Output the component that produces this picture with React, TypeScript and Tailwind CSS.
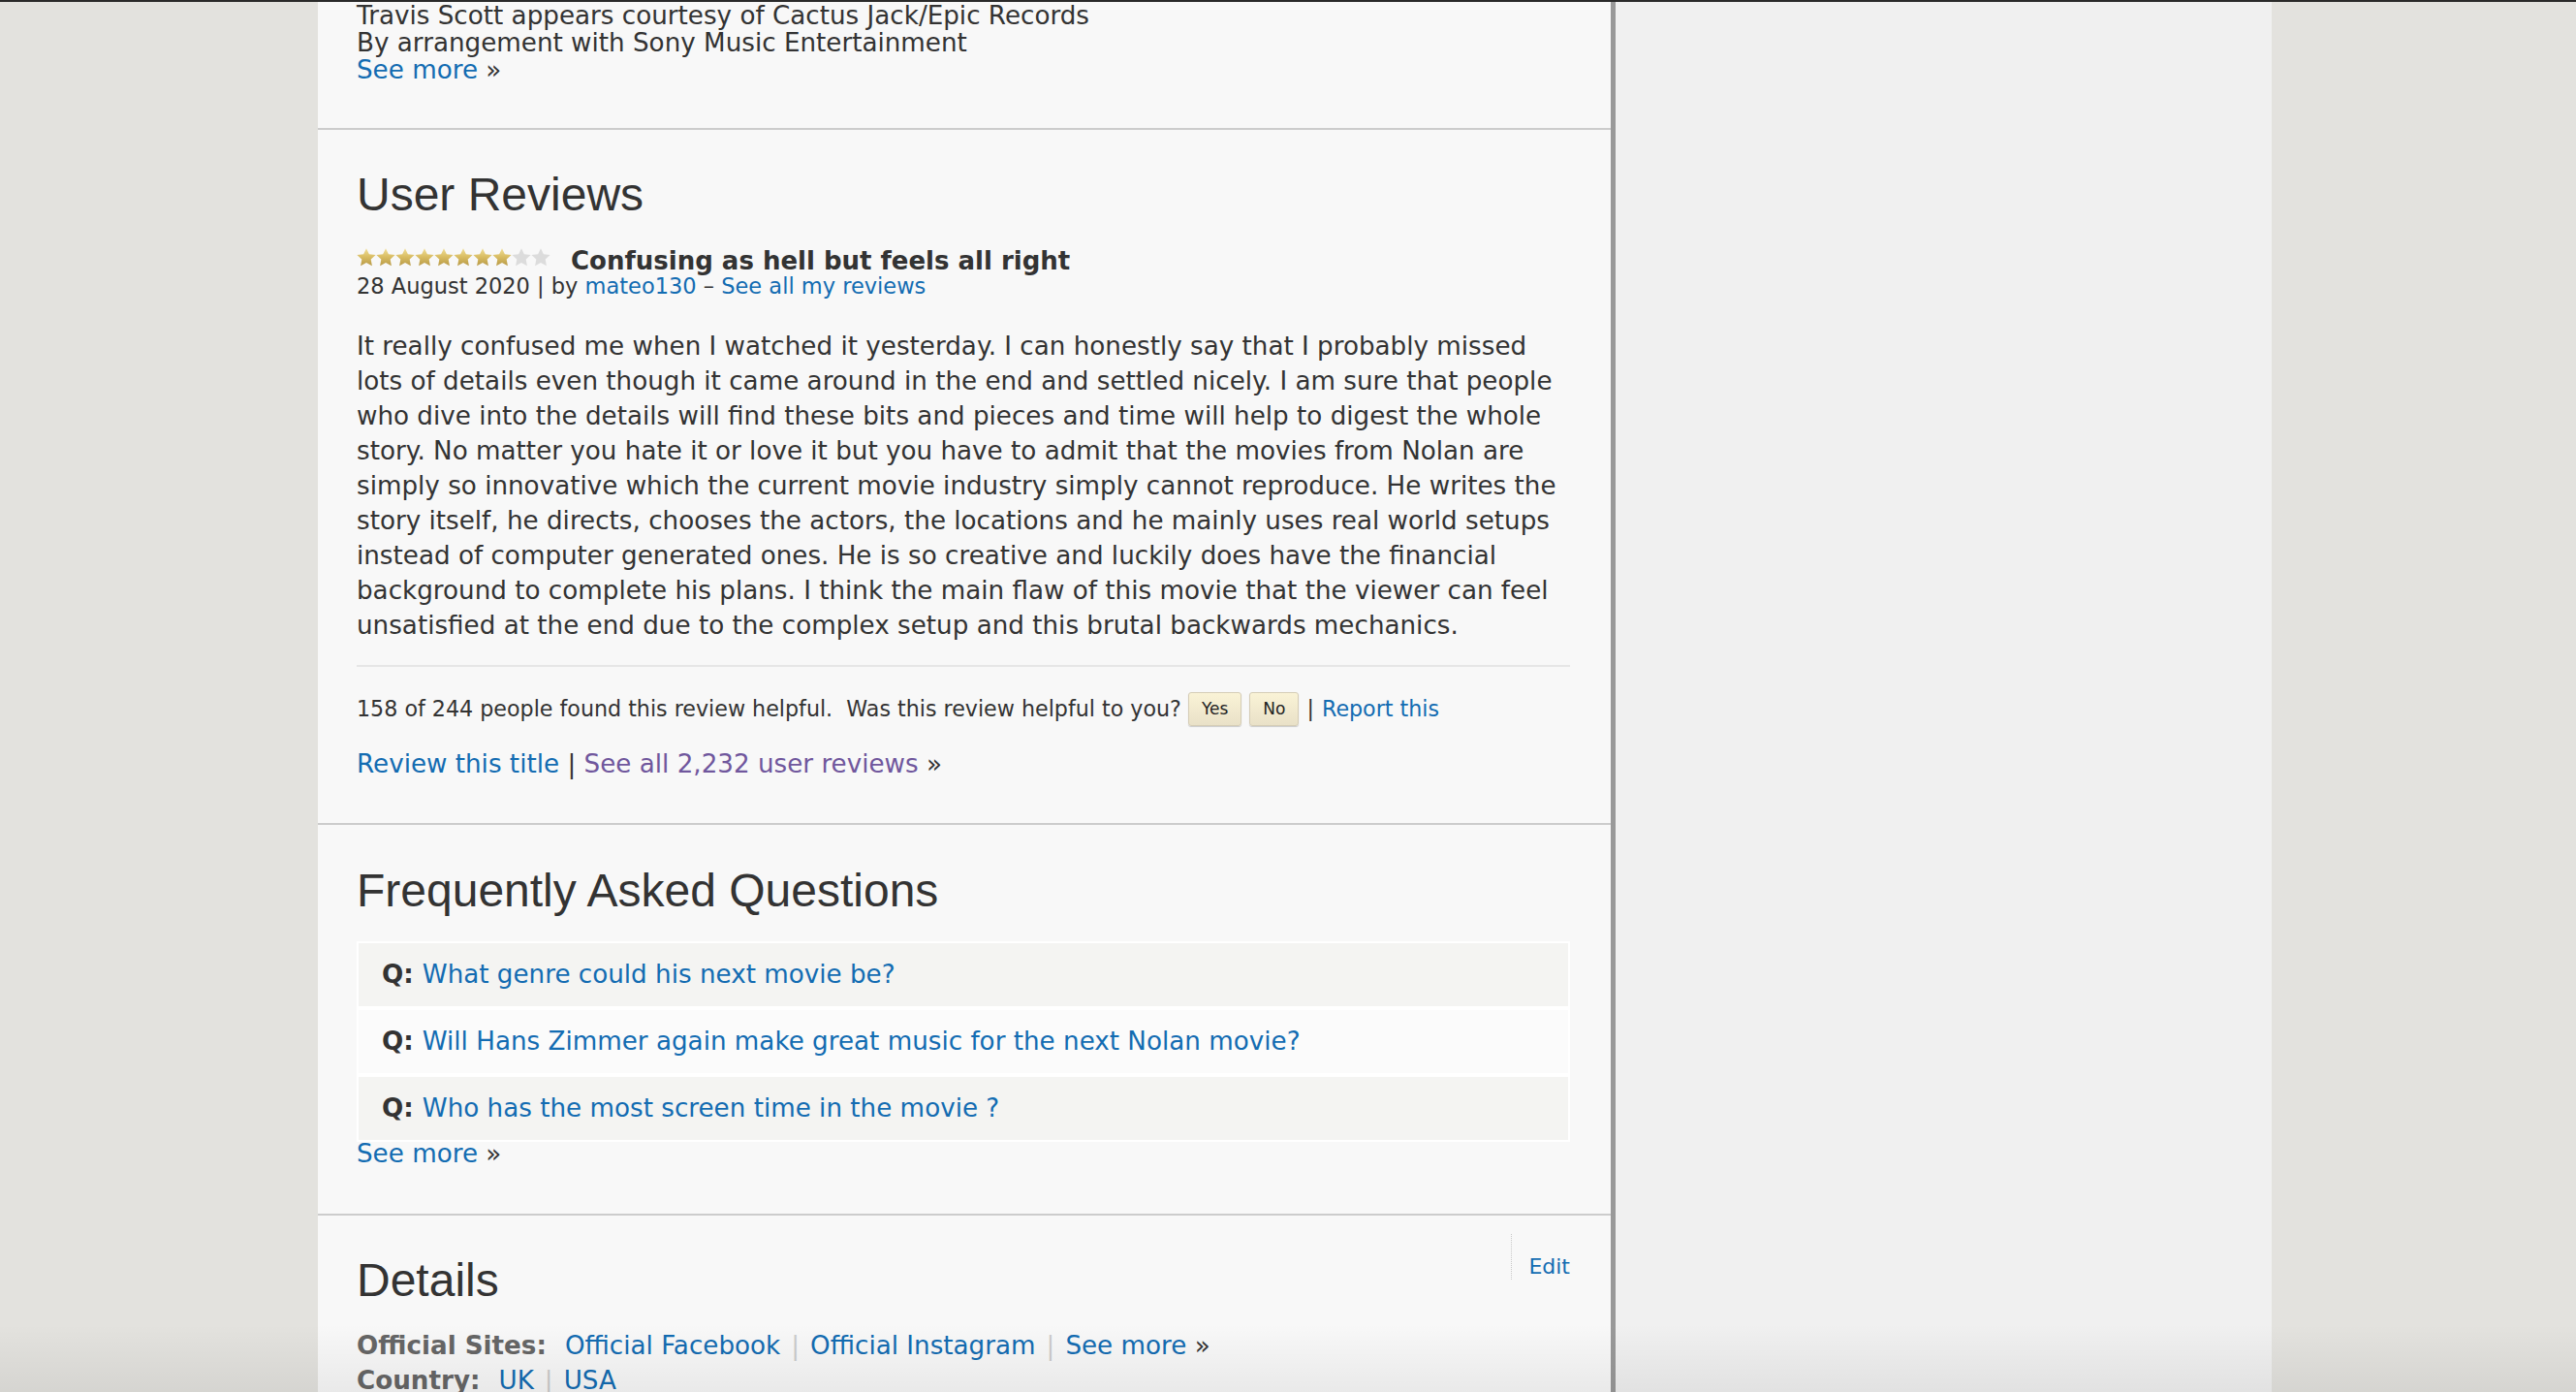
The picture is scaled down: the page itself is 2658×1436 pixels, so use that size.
import React from 'react';

const reviewLines = [
  'It really confused me when I watched it yesterday. I can honestly say that I probably missed',
  'lots of details even though it came around in the end and settled nicely. I am sure that people',
  'who dive into the details will find these bits and pieces and time will help to digest the whole',
  'story. No matter you hate it or love it but you have to admit that the movies from Nolan are',
  'simply so innovative which the current movie industry simply cannot reproduce. He writes the',
  'story itself, he directs, chooses the actors, the locations and he mainly uses real world setups',
  'instead of computer generated ones. He is so creative and luckily does have the financial',
  'background to complete his plans. I think the main flaw of this movie that the viewer can feel',
  'unsatisfied at the end due to the complex setup and this brutal backwards mechanics.',
];

const faqs = [
  'What genre could his next movie be?',
  'Will Hans Zimmer again make great music for the next Nolan movie?',
  'Who has the most screen time in the movie ?',
];

const STAR = '10,0.2 12.9,6.3 19.6,7.1 14.7,11.6 15.9,18.2 10,14.9 4.1,18.2 5.3,11.6 0.4,7.1 7.1,6.3';

// 8 of 10 stars, drawn like the old rating sprite
function Stars({ rating }: { rating: number }) {
  return (
    <svg width="200" height="19" viewBox="0 0 200 19" className="mr-[21px] mt-[1px] shrink-0">
      <defs>
        <linearGradient id="gold" x1="0" y1="0" x2="0" y2="1">
          <stop offset="0" stopColor="#f1df98" />
          <stop offset="0.5" stopColor="#d8bc62" />
          <stop offset="1" stopColor="#b89a48" />
        </linearGradient>
      </defs>
      {Array.from({ length: 10 }).map((_, i) => (
        <polygon
          key={i}
          points={STAR}
          transform={`translate(${i * 20} 0)`}
          fill={i < rating ? 'url(#gold)' : '#dcdcdc'}
        />
      ))}
    </svg>
  );
}

function Heading({ children }: { children: React.ReactNode }) {
  return (
    <h2 className="font-['Liberation_Sans',Arial,sans-serif] text-[48px] leading-[56px] font-normal text-[#333]">
      {children}
    </h2>
  );
}

function Sep() {
  return <span className="mx-[11px] text-[#ccc]">|</span>;
}

export default function App() {
  return (
    <div className="relative flex h-[1436px] w-[2658px] flex-col overflow-hidden bg-[#e3e2de] font-['DejaVu_Sans',Verdana,sans-serif] text-[#333]">
      <div className="h-[2px] shrink-0 bg-[#2a2a2a]" />
      <div className="flex min-h-0 flex-1">
        <div className="w-[328px] shrink-0" />

        <main className="w-[1334px] shrink-0 bg-[#f8f8f8]">
          {/* soundtrack tail */}
          <section className="border-b-2 border-[#cccccc] pl-[40px] pr-[42px] pb-[46px] text-[26.2px] leading-[28px]">
            <div>Travis Scott appears courtesy of Cactus Jack/Epic Records</div>
            <div>By arrangement with Sony Music Entertainment</div>
            <div>
              <a className="text-[#136cb2]">See more</a> »
            </div>
          </section>

          {/* user reviews */}
          <section className="border-b-2 border-[#cccccc] pl-[40px] pr-[42px] pt-[39px] pb-[46px]">
            <Heading>User Reviews</Heading>
            <div className="mt-[26px] flex items-start">
              <Stars rating={8} />
              <span className="text-[26px] font-bold leading-[28px]">Confusing as hell but feels all right</span>
            </div>
            <div className="text-[22.5px] leading-[24px]">
              28 August 2020 | by <a className="text-[#136cb2]">mateo130</a> –{' '}
              <a className="text-[#136cb2]">See all my reviews</a>
            </div>
            <div className="mt-[32px] text-[26.2px] leading-[36px]">
              {reviewLines.map((l) => (
                <div key={l} className="whitespace-nowrap">
                  {l}
                </div>
              ))}
            </div>
            <div className="mt-[23px] h-[2px] bg-[#e6e6e6]" />
            <div className="mt-[26px] flex h-[35px] items-center whitespace-nowrap text-[22.2px]">
              <span>158 of 244 people found this review helpful.&nbsp; Was this review helpful to you?</span>
              <button className="ml-[7px] h-[35px] rounded-[3px] border border-[#d5cdb6] bg-gradient-to-b from-[#faf3d6] to-[#e9e1c8] px-[13px] text-[17px] text-[#222] shadow-[0_1px_1px_rgba(0,0,0,0.18)]">
                Yes
              </button>
              <button className="ml-[8px] h-[35px] rounded-[3px] border border-[#d5cdb6] bg-gradient-to-b from-[#faf3d6] to-[#e9e1c8] px-[13px] text-[17px] text-[#222] shadow-[0_1px_1px_rgba(0,0,0,0.18)]">
                No
              </button>
              <span className="mx-[8px]">|</span>
              <a className="text-[#136cb2]">Report this</a>
            </div>
            <div className="mt-[24px] text-[26.2px] leading-[30px]">
              <a className="text-[#136cb2]">Review this title</a> |{' '}
              <a className="text-[#70579d]">See all 2,232 user reviews</a> »
            </div>
          </section>

          {/* faq */}
          <section className="border-b-2 border-[#cccccc] pl-[40px] pr-[42px] pt-[40px] pb-[50px]">
            <Heading>Frequently Asked Questions</Heading>
            <div className="mt-[24px] flex flex-col gap-[4px] border-2 border-white bg-white">
              {faqs.map((q, i) => (
                <div
                  key={q}
                  className={`flex h-[65px] items-center pl-[24px] text-[26.2px] ${i % 2 === 0 ? 'bg-[#f4f4f2]' : 'bg-[#fbfbfb]'}`}
                >
                  <span className="font-bold">Q:</span>
                  <a className="ml-[9px] text-[#136cb2]">{q}</a>
                </div>
              ))}
            </div>
            <div className="text-[26.2px] leading-[24px]">
              <a className="text-[#136cb2]">See more</a> »
            </div>
          </section>

          {/* details */}
          <section className="pl-[40px] pr-[42px] pt-[19px]">
            <div className="flex items-start justify-between">
              <div className="mt-[20px]">
                <Heading>Details</Heading>
              </div>
              <div className="h-[47px] border-l border-dotted border-[#c8c8c8] pl-[17px] pt-[22px] text-[22px] leading-[24px]">
                <a className="text-[#136cb2]">Edit</a>
              </div>
            </div>
            <div className="mt-[21px] text-[26.2px] leading-[36px]">
              <div className="whitespace-nowrap">
                <span className="font-bold text-[#666]">Official Sites:</span>
                <a className="ml-[19px] text-[#136cb2]">Official Facebook</a>
                <Sep />
                <a className="text-[#136cb2]">Official Instagram</a>
                <Sep />
                <a className="text-[#136cb2]">See more</a> »
              </div>
              <div className="whitespace-nowrap">
                <span className="font-bold text-[#666]">Country:</span>
                <a className="ml-[19px] text-[#136cb2]">UK</a>
                <Sep />
                <a className="text-[#136cb2]">USA</a>
              </div>
            </div>
          </section>
        </main>

        <aside className="w-[682px] shrink-0 border-l-[5px] border-[#999999] bg-[#f0f0f0]" />
        <div className="flex-1" />
      </div>

      {/* faint shade along the bottom edge of the capture */}
      <div className="pointer-events-none absolute bottom-0 left-0 right-0 h-[70px] bg-gradient-to-b from-transparent to-black/[0.06]" />
    </div>
  );
}
